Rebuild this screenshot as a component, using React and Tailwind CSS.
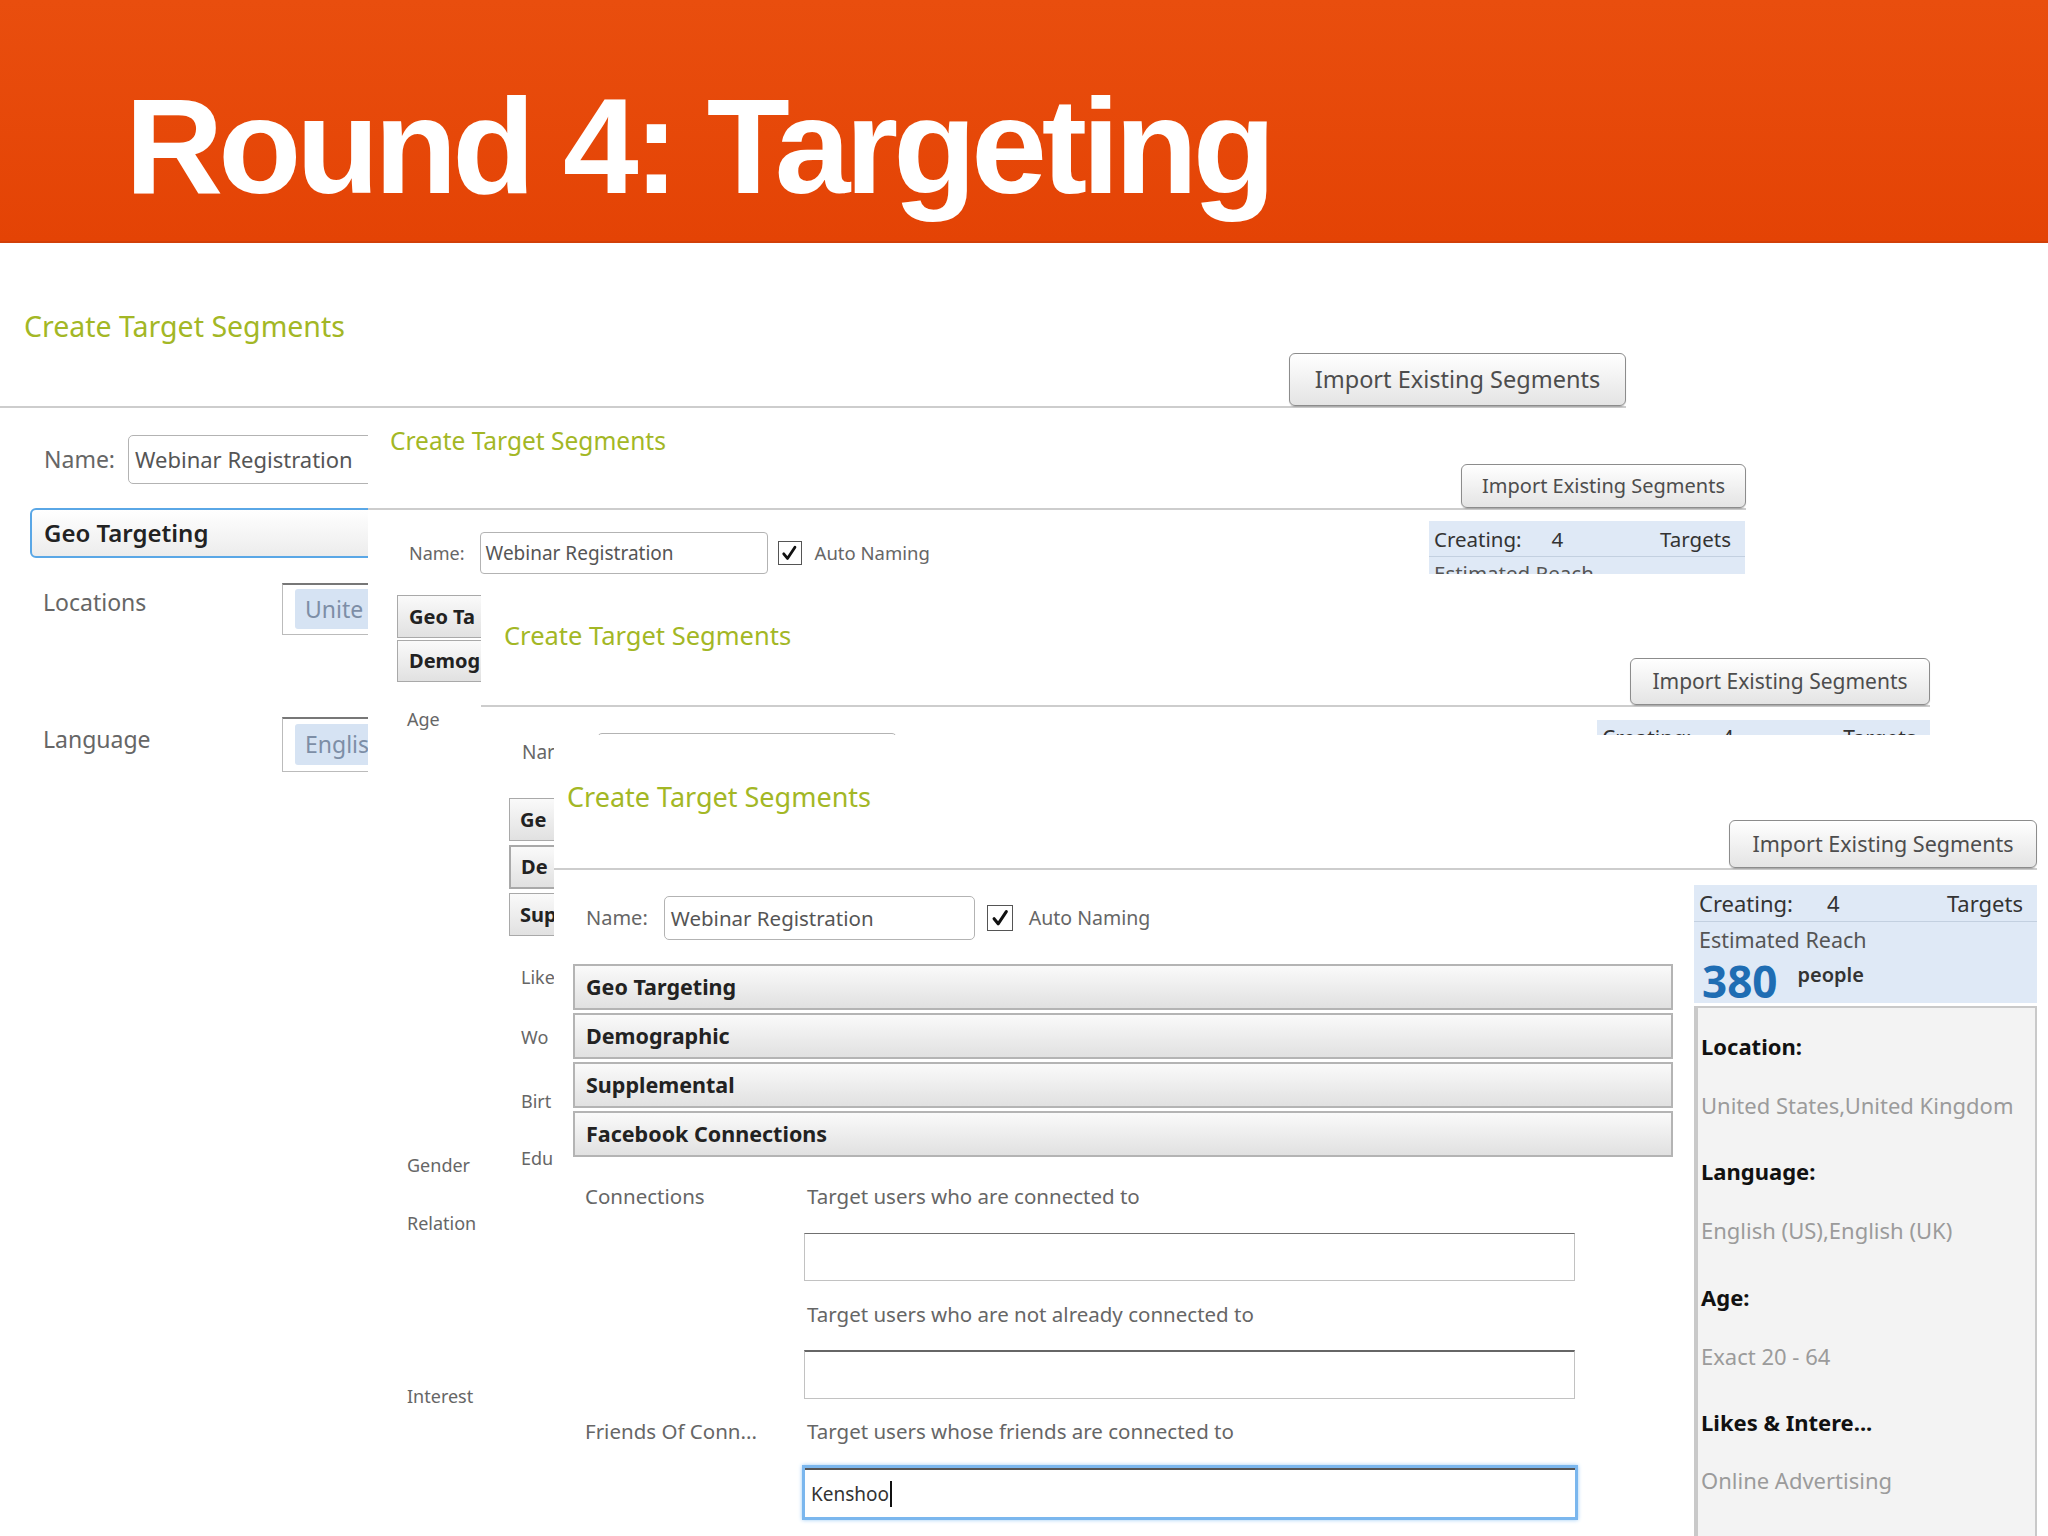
import React from "react";

const ui = "font-['Noto_Sans',sans-serif]";

function ImportBtn({ cls }) {
  return (
    <div
      className={`flex items-center justify-center rounded-[6px] border border-[#8c8c8c] bg-linear-to-b from-white to-[#e4e4e4] text-[#4d4d4d] shadow-[0_1px_1px_rgba(0,0,0,0.18)] ${cls}`}
    >
      Import Existing Segments
    </div>
  );
}

function Check({ cls }) {
  return (
    <div className={`flex items-center justify-center border-[1.5px] border-[#555] bg-white ${cls}`}>
      <svg viewBox="0 0 20 20" className="w-[85%] h-[85%]">
        <path d="M4 10.5 L8 15.5 L16 3.5" fill="none" stroke="#111" strokeWidth="3" strokeLinecap="round" strokeLinejoin="round" />
      </svg>
    </div>
  );
}

function GrayTab({ children, cls }) {
  return (
    <div
      className={`flex items-center whitespace-nowrap border border-[#a9a9a9] bg-linear-to-b from-[#fafafa] to-[#e1e1e1] font-bold text-[#222] ${cls}`}
    >
      {children}
    </div>
  );
}

function CreatingBox({ cls, text }) {
  return (
    <div className={`overflow-hidden bg-[#dfe9f6] ${cls}`}>
      <div className={`flex items-center border-b border-[#c3d0e0] pl-[5px] pr-[14px] text-[#333] ${text}`}>
        <span>Creating:</span>
        <span className="ml-[30px]">4</span>
        <span className="ml-auto">Targets</span>
      </div>
      <div className={`pl-[5px] text-[#555] ${text}`}>Estimated Reach</div>
    </div>
  );
}

export default function App() {
  return (
    <div className={`w-[2048px] h-[1536px] overflow-hidden bg-white ${ui}`}>
      {/* slide header */}
      <header className="h-[243px] bg-linear-to-b from-[#e94e0e] to-[#e44305] border-b-2 border-[#d23f08] pl-[125px] pt-[78px]">
        <h1 className="font-['Liberation_Sans',Arial,sans-serif] font-bold text-white text-[136px] leading-none tracking-[-0.037em]">
          Round 4: Targeting
        </h1>
      </header>

      {/* stacked screenshots */}
      <div className="relative h-[1293px] overflow-hidden">
        {/* layer 1 */}
        <section className="absolute left-0 top-0 w-[1626px] h-full bg-white">
          <div className="pt-[62px] pl-[24px] text-[#a3b725] text-[28.5px] leading-[42px]">Create Target Segments</div>
          <div className="mt-[6px] flex justify-end">
            <ImportBtn cls="h-[53px] w-[337px] text-[23.5px]" />
          </div>
          <div className="h-[2px] bg-[#cdcdcd]" />
          <div className="w-[368px] overflow-hidden whitespace-nowrap">
            <div className="mt-[27px] pl-[44px] flex items-center gap-[13px]">
              <span className="text-[23px] text-[#666]">Name:</span>
              <div className="h-[49px] w-[400px] shrink-0 border border-[#b3b3b3] rounded-[5px] pl-[6px] flex items-center text-[22px] text-[#555]">
                Webinar Registration
              </div>
            </div>
            <div className="mt-[24px] ml-[30px] w-[500px] h-[50px] border-2 border-[#5aa7e6] rounded-l-[6px] bg-linear-to-b from-white to-[#ececec] pl-[12px] flex items-center text-[24px] font-semibold text-[#222]">
              Geo Targeting
            </div>
            <div className="mt-[25px] flex items-start">
              <span className="w-[282px] shrink-0 pl-[43px] pt-[4px] text-[23px] leading-[30px] text-[#666]">Locations</span>
              <div className="w-[300px] shrink-0 h-[52px] border border-[#bbb] border-t-2 border-t-[#777] pl-[12px] pt-[4px]">
                <span className="inline-flex h-[40px] items-center px-[10px] bg-[#d6e3f3] rounded-[3px] text-[23px] text-[#7d8ea6]">
                  Unite
                </span>
              </div>
            </div>
            <div className="mt-[82px] flex items-start">
              <span className="w-[282px] shrink-0 pl-[43px] pt-[7px] text-[23px] leading-[30px] text-[#666]">Language</span>
              <div className="w-[300px] shrink-0 h-[55px] border border-[#bbb] border-t-2 border-t-[#777] pl-[12px] pt-[5px]">
                <span className="inline-flex h-[41px] items-center px-[10px] bg-[#d6e3f3] rounded-[3px] text-[23px] text-[#7d8ea6]">
                  Englis
                </span>
              </div>
            </div>
          </div>
        </section>

        {/* layer 2 */}
        <section className="absolute left-[368px] top-[167px] w-[1378px] bottom-0 bg-white">
          <div className="pt-[13px] pl-[22px] text-[#a3b725] text-[24.5px] leading-[36px]">Create Target Segments</div>
          <div className="mt-[5px] flex justify-end">
            <ImportBtn cls="h-[44px] w-[285px] text-[20px]" />
          </div>
          <div className="h-[2px] bg-[#cdcdcd]" />
          <div className="mt-[11px] flex justify-between items-start">
            <div className="mt-[11px] pl-[41px] flex items-center">
              <span className="text-[18px] text-[#666]">Name:</span>
              <div className="ml-[15px] h-[42px] w-[288px] border border-[#b3b3b3] rounded-[4px] pl-[5px] flex items-center text-[19px] text-[#555]">
                Webinar Registration
              </div>
              <Check cls="ml-[10px] w-[24px] h-[24px]" />
              <span className="ml-[13px] text-[18.5px] text-[#666]">Auto Naming</span>
            </div>
            <CreatingBox cls="w-[316px] h-[53px] mr-[1px]" text="h-[36px] text-[20.5px] leading-[32px]" />
          </div>
          <div className="w-[113px] overflow-hidden whitespace-nowrap">
            <div className="mt-[21px] ml-[29px] flex flex-col gap-[2px]">
              <GrayTab cls="w-[200px] h-[43px] pl-[11px] text-[20px]">Geo Ta</GrayTab>
              <GrayTab cls="w-[200px] h-[42px] pl-[11px] text-[20px]">Demog</GrayTab>
            </div>
            <div className="ml-[39px] flex flex-col text-[18px] leading-[24px] text-[#666]">
              <span className="mt-[25px]">Age</span>
              <span className="mt-[422px]">Gender</span>
              <span className="mt-[34px]">Relation</span>
              <span className="mt-[149px]">Interest</span>
            </div>
          </div>
        </section>

        {/* layer 3 */}
        <section className="absolute left-[481px] top-[332px] w-[1449px] bottom-0 bg-white">
          <div className="pt-[42px] pl-[23px] text-[#a3b725] text-[25.5px] leading-[36px]">Create Target Segments</div>
          <div className="mt-[5px] flex justify-end">
            <ImportBtn cls="h-[47px] w-[300px] text-[21px]" />
          </div>
          <div className="h-[2px] bg-[#cdcdcd]" />
          <div className="mt-[13px] flex items-start h-[60px]">
            <div className="mt-[19px] ml-[41px] w-[32px] overflow-hidden whitespace-nowrap text-[19px] leading-[26px] text-[#666]">Nar</div>
            <div className="ml-[43px] mt-[13px] h-[2px] overflow-hidden">
              <div className="h-[44px] w-[300px] border border-[#b3b3b3] rounded-[5px]" />
            </div>
            <div className="ml-auto h-[15px] overflow-hidden">
              <CreatingBox cls="w-[333px] h-[60px]" text="h-[36px] text-[21px] leading-[32px]" />
            </div>
          </div>
          <div className="w-[73px] overflow-hidden whitespace-nowrap">
            <div className="mt-[18px] ml-[28px] flex flex-col gap-[4px]">
              <GrayTab cls="w-[200px] h-[43px] pl-[10px] text-[20px]">Ge</GrayTab>
              <GrayTab cls="w-[200px] h-[44px] pl-[10px] text-[20px] border-2 border-[#4f9fe3]">De</GrayTab>
              <GrayTab cls="w-[200px] h-[43px] pl-[10px] text-[20px]">Sup</GrayTab>
            </div>
            <div className="ml-[40px] flex flex-col text-[18px] leading-[24px] text-[#666]">
              <span className="mt-[29px]">Like</span>
              <span className="mt-[36px]">Wo</span>
              <span className="mt-[40px]">Birt</span>
              <span className="mt-[33px]">Edu</span>
            </div>
          </div>
        </section>

        {/* layer 4 */}
        <section className="absolute left-[554px] top-[492px] w-[1483px] bottom-0 bg-white">
          <div className="pt-[43px] pl-[13px] text-[#a3b725] text-[27px] leading-[38px]">Create Target Segments</div>
          <div className="mt-[4px] flex justify-end">
            <ImportBtn cls="h-[48px] w-[308px] text-[21.5px]" />
          </div>
          <div className="h-[2px] bg-[#cdcdcd]" />

          <div className="flex">
            <div className="w-[1140px]">
              <div className="mt-[26px] pl-[32px] flex items-center">
                <span className="text-[20px] text-[#666]">Name:</span>
                <div className="ml-[16px] h-[44px] w-[311px] border border-[#b3b3b3] rounded-[5px] pl-[6px] flex items-center text-[20.5px] text-[#555]">
                  Webinar Registration
                </div>
                <Check cls="ml-[12px] w-[26px] h-[26px]" />
                <span className="ml-[16px] text-[19.5px] text-[#666]">Auto Naming</span>
              </div>

              <div className="mt-[24px] ml-[19px] w-[1100px] flex flex-col gap-[3px]">
                <GrayTab cls="h-[46px] border-2 border-[#b4b4b4] pl-[11px] text-[21.5px]">Geo Targeting</GrayTab>
                <GrayTab cls="h-[46px] border-2 border-[#b4b4b4] pl-[11px] text-[21.5px]">Demographic</GrayTab>
                <GrayTab cls="h-[46px] border-2 border-[#b4b4b4] pl-[11px] text-[21.5px]">Supplemental</GrayTab>
                <GrayTab cls="h-[46px] border-2 border-[#b4b4b4] pl-[11px] text-[21.5px]">Facebook Connections</GrayTab>
              </div>

              <div className="mt-[26px] pl-[31px] flex flex-col text-[20.5px] leading-[26px] text-[#666]">
                <div className="flex">
                  <span className="w-[219px]">Connections</span>
                  <span className="pl-[3px]">Target users who are connected to</span>
                </div>
                <div className="mt-[24px] ml-[219px] w-[771px] h-[48px] border border-[#c2c2c2] border-t-[#707070]" />
                <div className="mt-[20px] ml-[219px] pl-[3px]">Target users who are not already connected to</div>
                <div className="mt-[23px] ml-[219px] w-[771px] h-[49px] border border-[#c2c2c2] border-t-2 border-t-[#666]" />
                <div className="mt-[19px] flex">
                  <span className="w-[219px]">Friends Of Conn...</span>
                  <span className="pl-[3px]">Target users whose friends are connected to</span>
                </div>
                <div className="mt-[21px] ml-[217px] w-[776px] h-[55px] border-[3px] border-[#7bb7ee] shadow-[0_0_4px_#9ccbf5] flex">
                  <div className="flex-1 border-t-2 border-[#555] flex items-center pl-[6px] text-[19px] text-[#333]">
                    Kenshoo
                    <span className="ml-[1px] w-[1.5px] h-[26px] bg-[#111]" />
                  </div>
                </div>
              </div>
            </div>

            {/* summary panel */}
            <aside className="w-[343px] mt-[15px]">
              <div className="h-[118px] overflow-hidden bg-[#dfe9f6]">
                <div className="h-[37px] flex items-center border-b border-[#c3d0e0] pl-[5px] pr-[14px] text-[22px] text-[#333]">
                  <span>Creating:</span>
                  <span className="ml-[34px]">4</span>
                  <span className="ml-auto">Targets</span>
                </div>
                <div className="mt-[6px] pl-[5px] text-[21.5px] leading-[24px] text-[#555]">Estimated Reach</div>
                <div className="mt-[7px] pl-[8px] flex items-start">
                  <span className="text-[44px] leading-[44px] font-bold text-[#1f6db3]">380</span>
                  <span className="ml-[20px] mt-[3px] text-[20px] leading-[26px] font-semibold text-[#333]">people</span>
                </div>
              </div>
              <div className="mt-[3px] h-[600px] bg-[#f3f3f3] border-l-4 border-t-2 border-r-2 border-[#c9c9c9] pl-[3px] pt-[25px] flex flex-col text-[22px] leading-[26px]">
                <span className="font-bold text-[#111]">Location:</span>
                <span className="mt-[33px] text-[#9b9b9b]">United States,United Kingdom</span>
                <span className="mt-[40px] font-bold text-[#111]">Language:</span>
                <span className="mt-[33px] text-[#9b9b9b]">English (US),English (UK)</span>
                <span className="mt-[41px] font-bold text-[#111]">Age:</span>
                <span className="mt-[33px] text-[#9b9b9b]">Exact 20 - 64</span>
                <span className="mt-[40px] font-bold text-[#111]">Likes &amp; Intere...</span>
                <span className="mt-[32px] text-[#9b9b9b]">Online Advertising</span>
              </div>
            </aside>
          </div>
        </section>
      </div>
    </div>
  );
}
